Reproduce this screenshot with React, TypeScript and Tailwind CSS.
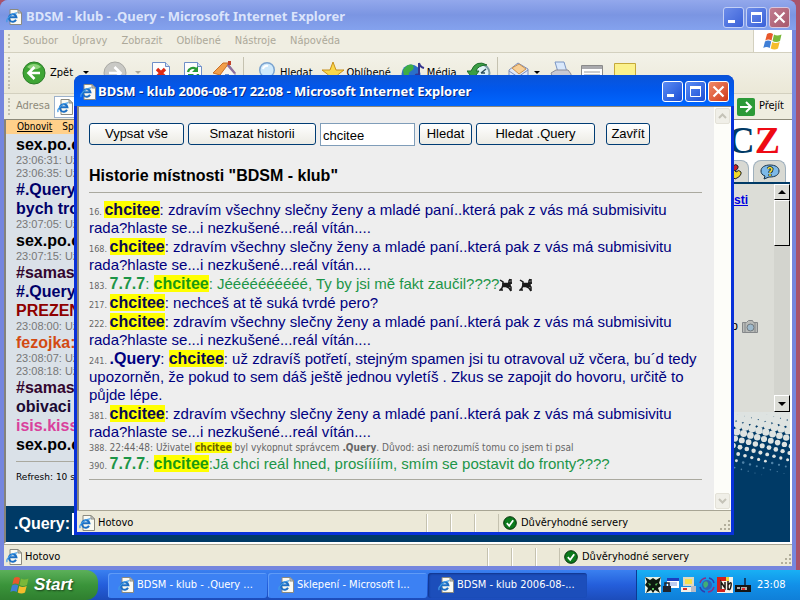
import React from 'react';

type Part = { text: string; kind?: 'hit' | 'bold' | 'seven' };

interface LogEntry {
    id: number;
    parts: Part[];
    tone?: 'navy' | 'green' | 'system';
    cats?: boolean;
}

const SPAM = ': zdravím všechny slečny ženy a mladé paní..která pak z vás má submisivitu rada?hlaste se...i nezkušené...reál vítán....';

const LOG: LogEntry[] = [
    { id: 16, parts: [{ text: 'chcitee', kind: 'hit' }, { text: SPAM }] },
    { id: 168, parts: [{ text: 'chcitee', kind: 'hit' }, { text: SPAM }] },
    {
        id: 183,
        tone: 'green',
        cats: true,
        parts: [
            { text: '7.7.7', kind: 'seven' },
            { text: ': ' },
            { text: 'chcitee', kind: 'hit' },
            { text: ': Jéééééééééé, Ty by jsi mě fakt zaučil????' },
        ],
    },
    { id: 217, parts: [{ text: 'chcitee', kind: 'hit' }, { text: ': nechceš at tě suká tvrdé pero?' }] },
    { id: 222, parts: [{ text: 'chcitee', kind: 'hit' }, { text: SPAM }] },
    {
        id: 241,
        parts: [
            { text: '.Query', kind: 'bold' },
            { text: ': ' },
            { text: 'chcitee', kind: 'hit' },
            { text: ': už zdravíš potřetí, stejným spamen jsi tu otravoval už včera, bu´d tedy upozorněn, že pokud to sem dáš ještě jednou vyletíš . Zkus se zapojit do hovoru, určitě to půjde lépe.' },
        ],
    },
    { id: 381, parts: [{ text: 'chcitee', kind: 'hit' }, { text: SPAM }] },
    {
        id: 388,
        tone: 'system',
        parts: [
            { text: '22:44:48: Uživatel ' },
            { text: 'chcitee', kind: 'hit' },
            { text: ' byl vykopnut správcem ' },
            { text: '.Query', kind: 'bold' },
            { text: '. Důvod: asi nerozumíš tomu co jsem ti psal' },
        ],
    },
    {
        id: 390,
        tone: 'green',
        parts: [
            { text: '7.7.7', kind: 'seven' },
            { text: ': ' },
            { text: 'chcitee', kind: 'hit' },
            { text: ':Já chci reál hned, prosíííím, smím se postavit do fronty????' },
        ],
    },
];

const CHAT = [
    { text: 'sex.po.c', color: 'text-black' },
    { text: '23:06:31: Už' },
    { text: '23:06:35: Už' },
    { text: '#.Query:', color: 'text-[#00006a]' },
    { text: 'bych tro', color: 'text-[#00006a]' },
    { text: '23:07:05: Už' },
    { text: 'sex.po.c', color: 'text-black' },
    { text: '23:07:15: Už' },
    { text: '#samas', color: 'text-[#33062f]' },
    { text: '#.Query:', color: 'text-[#00006a]' },
    { text: 'PREZEN', color: 'text-[#8f0000]' },
    { text: '23:08:00: Už' },
    { text: 'fezojka:', color: 'text-[#d34a12]' },
    { text: '23:08:07: Už' },
    { text: '23:08:18: Už' },
    { text: '#samas', color: 'text-[#33062f]' },
    { text: 'obivaci', color: 'text-[#1a0a33]' },
    { text: 'isis.kiss', color: 'text-[#d9409c]' },
    { text: 'sex.po.c', color: 'text-black' },
];

const MENU = ['Soubor', 'Úpravy', 'Zobrazit', 'Oblíbené', 'Nástroje', 'Nápověda'];

const UI = "font-['DejaVu_Sans_Condensed','DejaVu_Sans',sans-serif] text-[11px]";
const ARIAL = "font-['Liberation_Sans',Arial,sans-serif]";

const PageIcon = () => (
    <svg viewBox="0 0 16 16" className="h-4 w-4 shrink-0">
        <path d="M4 .5h8l3.5 3.5v11.5H4z" fill="#fbfaf2" stroke="#8b8a80" />
        <path d="M12 .5v3.500h3.500z" fill="#cfd3d8" stroke="#8b8a80" />
        <path d="M10 10.800a3.800 3.800 0 1 1 .4-2.600H3.600" fill="none" stroke="#1c6fc4" strokeWidth="2" />
        <path d="M1.300 13C-.8 10.500 6 3.500 11.400 4" fill="none" stroke="#3f9ae6" strokeWidth="1.200" />
    </svg>
);

const FlagIcon = ({ className }: { className: string }) => (
    <svg viewBox="0 0 20 18" className={className}>
        <path d="M4 2Q7 0 10 2L8.500 8.500Q5.500 6.500 2.300 8.500z" fill="#e8582c" />
        <path d="M11 2.500Q14 4.500 18.500 2.500L17 9Q13 11 9.500 9z" fill="#7ab83a" />
        <path d="M2 9.500Q5 7.500 8.200 9.500L6.700 16Q3.500 14 .3 16z" fill="#3f7fd6" />
        <path d="M9.200 10Q12.500 12 16.700 10L15 16.500Q11.500 18.500 7.700 16.500z" fill="#f5bd2c" />
    </svg>
);

const CheckIcon = () => (
    <svg viewBox="0 0 14 14" className="h-3.5 w-3.5 shrink-0">
        <circle cx="7" cy="7" r="6.300" fill="#0c7a1c" stroke="#06300b" />
        <path d="M3.800 7.200l2.400 2.600 4-5.600" fill="none" stroke="#fff" strokeWidth="1.800" />
    </svg>
);

const CatIcon = () => (
    <svg viewBox="0 0 14 14" className="mr-1.5 inline h-3.5 w-3.5 align-[-3px]" fill="none" stroke="#1b1b1b" strokeWidth="1.500">
        <path d="M1 2l3 2v3h6V3l1-2M12 1v5" />
        <path d="M4 7l-1 3-2 2h3M5 7l5 3 2 3M10 7l2 2v4M9 5h4" />
        <path d="M4 5.500h7v3H4z" fill="#1b1b1b" />
    </svg>
);

const Grip = () => (
    <svg viewBox="0 0 12 12" className="h-3 w-3 self-end" fill="#b3af9c">
        <path d="M9 0h2v2H9zM9 4h2v2H9zM5 4h2v2H5zM9 8h2v2H9zM5 8h2v2H5zM1 8h2v2H1z" />
    </svg>
);

const Caret = ({ color }: { color: string }) => (
    <svg viewBox="0 0 6 4" className="h-1 w-1.5" fill={color}>
        <path d="M0 0h6L3 3z" />
    </svg>
);

const Handle = () => <span className="my-1 w-px self-stretch border-l-2 border-dotted border-[#c2bfae]" />;

// halftone fade: slanted lattice of dots that shrink towards the bottom
const Dots = () => {
    const dots: React.ReactNode[] = [];
    for (let row = -6; row < 13; row++) {
        for (let col = -1; col < 24; col++) {
            const x = col * 6.8 - row * 1.8;
            const y = row * 6.8 + col * 1.8;
            const r = Math.min(5.2, 5.1 - y * 0.075);
            if (y < -8 || r <= 0.3) continue;
            dots.push(<circle key={`${row}:${col}`} cx={x} cy={y} r={r} fill={y > 50 ? '#4f83a8' : '#dee3e1'} />);
        }
    }
    return (
        <svg viewBox="0 0 128 80" className="block h-20 w-full bg-[#003a66]" preserveAspectRatio="xMaxYMin slice">
            {dots}
        </svg>
    );
};

const WindowButtons = ({ active }: { active: boolean }) => {
    const blue = active
        ? 'border-white bg-linear-to-br from-[#5c8cf4] to-[#1c4cd4]'
        : 'border-[#c3d0f6] bg-linear-to-br from-[#6c8cea] to-[#3a60d8]';
    const red = active
        ? 'border-white bg-linear-to-br from-[#f08a68] to-[#cf3411]'
        : 'border-[#d9c6dc] bg-linear-to-br from-[#c07c90] to-[#a8586c]';
    const box = 'grid h-[21px] w-[21px] place-items-center rounded-[3px] border';
    return (
        <div className="flex gap-0.5">
            <button aria-label="Minimalizovat" className={`${box} ${blue}`}>
                <svg viewBox="0 0 19 19" className="h-[19px] w-[19px]"><path d="M4 12h7v3H4z" fill="#fff" /></svg>
            </button>
            <button aria-label="Maximalizovat" className={`${box} ${blue}`}>
                <svg viewBox="0 0 19 19" className="h-[19px] w-[19px]">
                    <path d="M4.500 5.500h10v9h-10z" fill="none" stroke="#fff" />
                    <path d="M4 4h11v3H4z" fill="#fff" />
                </svg>
            </button>
            <button aria-label="Zavřít okno" className={`${box} ${red}`}>
                <svg viewBox="0 0 19 19" className="h-[19px] w-[19px]">
                    <path d="M4.500 4.500l10 10M14.500 4.500l-10 10" stroke="#fff" strokeWidth="2.200" />
                </svg>
            </button>
        </div>
    );
};

const StatusBar = () => (
    <footer className={`${UI} flex h-[22px] shrink-0 items-center border-t border-[#a8a594] bg-[#ece9d8] pt-0.5 pl-0.5 text-black`}>
        <PageIcon />
        <span className="ml-[3px] flex-1 pt-px">Hotovo</span>
        {[0, 1, 2].map((n) => (
            <span key={n} className="h-[18px] w-6 border-l border-[#c5c2b0] shadow-[inset_1px_0_#fff]" />
        ))}
        <div className="flex h-[18px] w-[233px] items-center gap-1 border-l border-[#c5c2b0] pl-1">
            <CheckIcon />
            <span className="flex-1 pt-px">Důvěryhodné servery</span>
            <Grip />
        </div>
    </footer>
);

const Toolbar = () => (
    <div className={`${UI} flex h-[41px] items-center border-b border-[#d3d0bf] bg-linear-to-b from-[#f3f2e9] to-[#ebe8d7] pl-1 text-black`}>
        <Handle />
        <button className="ml-3 flex items-center gap-1">
            <svg viewBox="0 0 24 24" className="h-6 w-6">
                <circle cx="12" cy="12" r="11" fill="#3fa535" stroke="#2b7d28" />
                <path d="M5 6a9 8 0 0 1 14 0q-7 5-14 0z" fill="#8fd47c" />
                <path d="M12.500 6l-6 6 6 6M7 12h11" fill="none" stroke="#fff" strokeWidth="2.600" />
            </svg>
            Zpět
        </button>
        <span className="ml-2.5"><Caret color="#000" /></span>
        <button aria-label="Vpřed" className="ml-3.5 flex items-center gap-2">
            <svg viewBox="0 0 24 24" className="h-6 w-6">
                <circle cx="12" cy="12" r="11" fill="#c9c9c5" stroke="#a9a9a4" />
                <path d="M11.500 6l6 6-6 6M17 12H6" fill="none" stroke="#fff" strokeWidth="2.600" />
            </svg>
            <Caret color="#aca899" />
        </button>
        <button aria-label="Zastavit" className="ml-2.5">
            <svg viewBox="0 0 20 24" className="h-6 w-5">
                <path d="M1.500 1.500h13l4 4v17h-17z" fill="#fdfdfd" stroke="#6f8fc8" />
                <path d="M14.500 1.500v4h4" fill="#d5e1f5" stroke="#6f8fc8" />
                <path d="M6 8l8 8M14 8l-8 8" stroke="#dd2a14" strokeWidth="3.400" />
            </svg>
        </button>
        <button aria-label="Obnovit stránku" className="ml-3">
            <svg viewBox="0 0 20 24" className="h-6 w-5">
                <path d="M1.500 1.500h13l4 4v17h-17z" fill="#fdfdfd" stroke="#6f8fc8" />
                <path d="M14.500 1.500v4h4" fill="#d5e1f5" stroke="#6f8fc8" />
                <path d="M5 11a5 5 0 0 1 8-3M15 13a5 5 0 0 1-8 4" fill="none" stroke="#2a9a35" strokeWidth="2.400" />
                <path d="M15 5v6h-6zM5 19v-6h6z" fill="#2a9a35" />
            </svg>
        </button>
        <button aria-label="Domů" className="ml-2.5">
            <svg viewBox="0 0 24 24" className="h-6 w-6">
                <path d="M7 11l8-8 7 9v11H7z" fill="#f7f4ef" stroke="#9a8fa0" />
                <path d="M0 12L10 2l6 0L7 14z" fill="#f2a04b" stroke="#c96f26" />
                <path d="M15 2l8 10-2 1-7-8z" fill="#8d6f9e" />
                <path d="M15 0h3v4h-3z" fill="#c2452c" />
                <path d="M12 13h4v9h-4z" fill="#6d93cf" />
            </svg>
        </button>
        <span className="ml-1.5 h-8 w-px bg-[#c5c2b0]" />
        <button className="ml-3.5 flex items-center gap-0.5">
            <svg viewBox="0 0 20 24" className="h-6 w-5">
                <path d="M13 15l6 7" stroke="#b78a4c" strokeWidth="3" />
                <circle cx="9" cy="9" r="7.300" fill="#cfe9fb" stroke="#7ba4d0" strokeWidth="1.500" />
                <path d="M5 8a4 4 0 0 1 5-3" fill="none" stroke="#fff" strokeWidth="2" />
            </svg>
            Hledat
        </button>
        <button className="ml-2 flex items-center gap-0.5">
            <svg viewBox="0 0 24 24" className="h-6 w-6">
                <path d="M12 1l3 8h8l-6.500 5 2.500 8-7-5-7 5 2.500-8L1 9h8z" fill="#fbd84a" stroke="#c8901c" />
            </svg>
            Oblíbené
        </button>
        <button className="ml-2.5 flex items-center gap-0.5">
            <svg viewBox="0 0 24 24" className="h-6 w-6">
                <circle cx="10" cy="13" r="9.500" fill="#2b6fc9" />
                <path d="M2 9q5-7 10-5 2 4-2 6t-1 6q-4 2-6-1z" fill="#3fae43" />
                <path d="M18 2v13M18 2q1 4 5 5" fill="none" stroke="#35358f" strokeWidth="2" />
                <circle cx="16" cy="15" r="2.500" fill="#35358f" />
            </svg>
            Média
        </button>
        <button aria-label="Historie" className="ml-2.5">
            <svg viewBox="0 0 24 24" className="h-6 w-6">
                <circle cx="14" cy="12" r="8.500" fill="#dff1f5" stroke="#7d9aa5" strokeWidth="2" />
                <path d="M14 12l5-4M14 12h4" fill="none" stroke="#2d4f5c" strokeWidth="1.500" />
                <path d="M20 4Q9-2 4 10H0l6 8 6-8H9q2-6 11-6z" fill="#3c9e45" stroke="#1e6d2c" />
            </svg>
        </button>
        <span className="ml-1.5 h-8 w-px bg-[#c5c2b0]" />
        <button aria-label="Pošta" className="ml-2.5 flex items-center gap-1">
            <svg viewBox="0 0 22 24" className="h-6 w-[22px]">
                <path d="M1 9l9-7 10 6v12H1z" fill="#dfe7f7" stroke="#7d8db8" />
                <path d="M4 7l7-4 7 5-7 5z" fill="#f8cf96" stroke="#c99350" />
                <path d="M1 10l9 6 10-7" fill="none" stroke="#7d8db8" />
            </svg>
            <Caret color="#000" />
        </button>
        <button aria-label="Tisk" className="ml-2.5">
            <svg viewBox="0 0 22 24" className="h-6 w-[22px]">
                <path d="M5 1h9l3 10H8z" fill="#d9e8fb" stroke="#7b96c4" />
                <path d="M1 12l5-3h12l3 4v7H4z" fill="#c9c9d3" stroke="#8d8d98" />
            </svg>
        </button>
        <button aria-label="Upravit" className="ml-2">
            <svg viewBox="0 0 24 24" className="h-6 w-6">
                <path d="M1.500 4.500h21v16h-21z" fill="#fff" stroke="#8a8a8a" />
                <path d="M2 5h20v3H2z" fill="#a9a9ad" />
                <path d="M4 11h16M4 14h16" stroke="#9a9a9a" />
            </svg>
        </button>
        <button aria-label="Diskuse" className="ml-2.5">
            <svg viewBox="0 0 22 24" className="h-6 w-[22px]">
                <path d="M.5 2.500h21v18H.5z" fill="#fbf18c" stroke="#c5a93a" />
            </svg>
        </button>
    </div>
);

const ChatFrame = () => (
    <div className={`${ARIAL} flex min-h-0 flex-1 flex-col bg-[#dae1e8]`}>
        <nav className="flex h-3.5 shrink-0 gap-2.5 overflow-hidden bg-[#ffd08a] pl-[11px] font-['DejaVu_Sans_Condensed',sans-serif] text-[10px] leading-3.5 text-black">
            <a href="#obnovit" className="underline">Obnovit</a>
            <a href="#sp">Sp</a>
        </nav>
        <div className="min-h-0 flex-1 overflow-hidden px-2.5 pt-px">
            {CHAT.map((line, i) =>
                line.color ? (
                    <p key={i} className={`h-[19px] text-base leading-[19px] font-bold whitespace-nowrap ${line.color}`}>{line.text}</p>
                ) : (
                    <p key={i} className="h-[13px] text-[11px] leading-[13px] whitespace-nowrap text-[#777]">{line.text}</p>
                ),
            )}
            <hr className="mt-[7px] border-[#aaa99f]" />
            <p className="mt-2 font-['DejaVu_Sans',sans-serif] text-[9px] leading-3.5 text-black">Refresh: 10 s</p>
        </div>
        <form className="flex h-9 shrink-0 items-center gap-0.5 bg-[#003a66] pl-2">
            <label htmlFor="vzkaz" className="text-base font-bold text-white">.Query:</label>
            <input id="vzkaz" className="h-[22px] w-60 bg-white" />
        </form>
    </div>
);

const SidePanel = () => (
    <aside className="flex w-32 shrink-0 flex-col bg-[#003a66]">
        <div className="flex h-[62px] flex-col justify-between bg-white">
            <p className="pr-2.5 text-right font-['Liberation_Serif',serif] text-[38px] leading-10 font-bold text-[#003a66]">
                C<span className="text-[#ee0a14]">Z</span>
            </p>
            <div className="flex justify-end gap-1 pr-1">
                <button aria-label="Oblíbení" className="grid h-[23px] w-[33px] place-items-center rounded-t-lg border border-b-0 border-[#9fb0bd] bg-[#d8d9d3]">
                    <svg viewBox="0 0 20 18" className="h-[18px] w-5">
                        <path d="M9 9Q2 4 5 1q4-1 5 2 3-3 5 0 1 4-6 6z" fill="#c3202a" stroke="#222" />
                        <path d="M12 16Q5 10 8 7q4-1 5 2 3-3 5 0 1 4-6 7z" fill="#f0d92a" stroke="#222" />
                    </svg>
                </button>
                <button aria-label="Nápověda chatu" className="grid h-[23px] w-[33px] place-items-center rounded-t-lg border border-b-0 border-[#9fb0bd] bg-[#d8d9d3]">
                    <svg viewBox="0 0 20 16" className="h-4 w-5">
                        <path d="M10 1c5 0 9 2 9 6s-4 6-9 6l-1 0-5 2 1-3C2 11 1 9 1 7c0-4 4-6 9-6z" fill="#7db9e8" stroke="#16324a" />
                        <path d="M8 5q2-3 4 0 0 2-2 3v1M10 10v2" fill="none" stroke="#16324a" strokeWidth="3.200" />
                        <path d="M8 5q2-3 4 0 0 2-2 3v1M10 10v2" fill="none" stroke="#f4e23a" strokeWidth="1.500" />
                    </svg>
                </button>
            </div>
        </div>
        <div className={`${ARIAL} flex h-[230px] border-t-2 border-[#003a66] bg-[#dcddd7]`}>
            <div className="flex-1 pt-2 text-xs font-bold">
                <p className="pr-[26px] text-right"><a href="#mistnosti" className="text-[#0000e0] underline">sti</a></p>
                <div className="mt-[110px] flex items-center justify-end gap-1 pr-4 font-normal text-black">
                    o
                    <svg viewBox="0 0 16 13" className="h-[13px] w-4">
                        <path d="M.5 2.500h4l2-2h4l1 2h4v10H.5z" fill="#b9bbb8" stroke="#85888a" />
                        <circle cx="8.500" cy="7.500" r="3.500" fill="#9db9cc" stroke="#72797e" />
                        <path d="M3 3v9M13 3v9" stroke="#85888a" />
                    </svg>
                </div>
            </div>
            <div className="flex w-4 flex-col bg-[#d3d4ce]">
                <button aria-label="Nahoru" className="grid h-4 place-items-center border border-t-white border-l-white border-r-black border-b-black bg-[#dcddd7]">
                    <svg viewBox="0 0 8 4" className="h-1 w-2"><path d="M0 4l4-4 4 4z" /></svg>
                </button>
                <span className="h-[46px] border border-t-white border-l-white border-r-black border-b-black bg-[#dcddd7]" />
                <button aria-label="Dolů" className="mt-auto grid h-[17px] place-items-center border border-t-white border-l-white border-r-black border-b-black bg-[#dcddd7]">
                    <svg viewBox="0 0 8 4" className="h-1 w-2"><path d="M0 0l4 4 4-4z" /></svg>
                </button>
            </div>
        </div>
        <Dots />
    </aside>
);

const MainWindow = () => (
    <section className="absolute inset-y-0 right-1 left-0 flex flex-col rounded-t-lg bg-[#7586de] px-1 pb-1">
        <header className="-mx-1 flex h-[30px] shrink-0 items-center rounded-t-lg bg-linear-to-b from-[#93a8ec] via-[#7b95e2] to-[#84a2ee] pt-1 pr-1.5 pl-1.5">
            <PageIcon />
            <h2 className="ml-1 flex-1 font-['Noto_Sans',sans-serif] text-[13px] font-bold text-[#dbe4fb]">BDSM - klub - .Query - Microsoft Internet Explorer</h2>
            <WindowButtons active={false} />
        </header>
        <div className="flex h-[23px] shrink-0 items-center border-b border-[#d3d0bf] bg-[#f0eee2] pl-1">
            <Handle />
            <nav className={`${UI} ml-[13px] flex flex-1 gap-3.5 text-[#aca899]`}>
                {MENU.map((item) => (
                    <button key={item}>{item}</button>
                ))}
            </nav>
            <div className="grid h-full w-[39px] place-items-center border-l border-[#d3d0bf] bg-white">
                <FlagIcon className="h-[18px] w-5" />
            </div>
        </div>
        <Toolbar />
        <div className={`${UI} flex h-[26px] shrink-0 items-center border-b border-[#8d8a7a] bg-[#efede0] pl-1`}>
            <Handle />
            <label htmlFor="adresa" className="ml-1.5 text-[#8d8a7a]">Adresa</label>
            <div className="ml-1 flex h-[22px] flex-1 items-center border border-[#9db2cc] bg-white pl-0.5">
                <PageIcon />
                <input id="adresa" className="min-w-0 flex-1" />
            </div>
            <button className="ml-1 flex items-center gap-1 pr-2 text-black">
                <svg viewBox="0 0 18 18" className="h-[18px] w-[18px]">
                    <rect width="18" height="18" rx="2" fill="#2c9a38" />
                    <path d="M3 9h11M9 4l5 5-5 5" fill="none" stroke="#fff" strokeWidth="2" />
                </svg>
                Přejít
            </button>
        </div>
        <div className="flex min-h-0 flex-1 border-r-2 border-b-2 border-l-2 border-r-white border-b-white border-l-[#85837a] bg-[#003a66]">
            <ChatFrame />
            <SidePanel />
        </div>
        <StatusBar />
    </section>
);

const toneClass = {
    navy: 'mt-px text-[15px] leading-[18px] text-[#000080]',
    green: 'mt-px text-[15px] leading-[18px] text-[#1c9548]',
    system: "mt-px font-['DejaVu_Sans_Condensed',sans-serif] text-[10px] leading-3 text-[#666]",
};

const kindClass = {
    hit: 'bg-[#ffff00] font-bold',
    bold: 'font-bold',
    seven: 'font-bold text-[#1c9548]',
};

const hitColor = {
    navy: 'text-[#0a0a50]',
    green: 'text-[#1a9a10]',
    system: 'text-[#6a6400]',
};

const Entry: React.FC<LogEntry> = ({ id, parts, tone = 'navy', cats }) => (
    <li className={toneClass[tone]}>
        <span className="font-['DejaVu_Sans_Condensed',sans-serif] text-[9px] leading-3 text-[#666]">{id}. </span>
        {parts.map((part, i) => (
            <span
                key={i}
                className={part.kind ? `${kindClass[part.kind]} ${part.kind === 'hit' ? hitColor[tone] : ''} ${tone === 'system' ? '' : 'text-base leading-[18px]'}` : ''}
            >
                {part.text}
            </span>
        ))}
        {cats && (
            <>
                <CatIcon />
                <CatIcon />
            </>
        )}
    </li>
);

const BTN = 'h-[22px] shrink-0 rounded-[3px] border border-[#003c74] bg-linear-to-b from-white to-[#ecebe4] text-[13px] text-black';

const HistoryWindow = () => (
    <section className="absolute top-[75px] right-[66px] bottom-[35px] left-[74px] flex flex-col rounded-t-lg bg-[#0831d9] px-[3px] pb-[3px]">
        <header className="-mx-[3px] flex h-[31px] shrink-0 items-center rounded-t-lg bg-linear-to-b from-[#0a53d8] via-[#0058ee] to-[#0066ff] pt-0.5 pr-[5px] pl-1.5">
            <PageIcon />
            <h1 className="ml-0.5 flex-1 font-['Noto_Sans',sans-serif] text-[13px] font-bold text-white [text-shadow:1px_1px_#0a2a80]">
                BDSM - klub 2006-08-17 22:08 - Microsoft Internet Explorer
            </h1>
            <WindowButtons active />
        </header>
        <div className="flex min-h-0 flex-1 border-t border-l-2 border-[#8a887d] bg-[#eeeeee]">
            <main className={`${ARIAL} min-w-0 flex-1 overflow-hidden pt-4 pr-3 pl-2.5`}>
                <form className="flex h-[23px] items-start" onSubmit={(e) => e.preventDefault()}>
                    <button className={`${BTN} w-[95px]`}>Vypsat vše</button>
                    <button className={`${BTN} ml-1 w-32`}>Smazat historii</button>
                    <input
                        aria-label="Hledaný text"
                        defaultValue="chcitee"
                        className="ml-1 h-[23px] w-[95px] border border-[#7f9db9] bg-white px-0.5 pt-0.5 text-[13px] text-black"
                    />
                    <button className={`${BTN} ml-1 w-[53px]`}>Hledat</button>
                    <button className={`${BTN} ml-1 w-[119px]`}>Hledat .Query</button>
                    <button className={`${BTN} ml-[11px] w-11`}>Zavřít</button>
                </form>
                <h2 className="mt-5 text-base leading-5 font-bold text-black">Historie místnosti "BDSM - klub"</h2>
                <hr className="mt-1.5 border-[#aaa99f]" />
                <ul className="mt-2">
                    {LOG.map((entry) => (
                        <Entry key={entry.id} {...entry} />
                    ))}
                </ul>
                <hr className="mt-1.5 border-[#aaa99f]" />
            </main>
            <div className="flex w-[17px] shrink-0 flex-col justify-between bg-[#fdfdf9] p-px">
                <button aria-label="Posunout nahoru" className="grid h-4 place-items-center rounded-xs border border-[#e4e2d8] bg-[#f0efe8]">
                    <svg viewBox="0 0 9 6" className="h-1.5 w-[9px]"><path d="M1 5l3.500-3.500L8 5" fill="none" stroke="#c5c3b8" strokeWidth="2" /></svg>
                </button>
                <button aria-label="Posunout dolů" className="grid h-4 place-items-center rounded-xs border border-[#e4e2d8] bg-[#f0efe8]">
                    <svg viewBox="0 0 9 6" className="h-1.5 w-[9px]"><path d="M1 1l3.500 3.500L8 1" fill="none" stroke="#c5c3b8" strokeWidth="2" /></svg>
                </button>
            </div>
        </div>
        <StatusBar />
    </section>
);

const TASKS = ['BDSM - klub - .Query ...', 'Sklepení - Microsoft I...', 'BDSM - klub 2006-08-...'];

const Taskbar = () => (
    <footer className={`${UI} flex h-[30px] shrink-0 items-center bg-linear-to-b from-[#3a80f0] via-[#245edb] to-[#1c4cba] text-white`}>
        <button className={`${ARIAL} flex h-full w-[98px] items-center gap-1 rounded-r-xl bg-linear-to-b from-[#5cb05a] via-[#3a943a] to-[#2f7f2f] pl-2.5 text-[17px] font-bold italic [text-shadow:1px_1px_2px_#1a401a]`}>
            <FlagIcon className="h-[18px] w-5" />
            Start
        </button>
        <div className="ml-2.5 flex min-w-0 flex-1 gap-px">
            {TASKS.map((task, i) => (
                <button
                    key={task}
                    className={`flex h-[25px] w-[159px] items-center gap-[3px] rounded-[3px] pl-2.5 ${i === 2 ? 'bg-[#1c4ebb] shadow-[inset_1px_1px_2px_#10348a]' : 'bg-[#3c81f3] shadow-[inset_1px_1px_#5f9bf7]'}`}
                >
                    <PageIcon />
                    {task}
                </button>
            ))}
        </div>
        <div className="flex h-full w-[164px] items-center gap-0.5 border-l border-[#0c3a94] bg-linear-to-b from-[#19b0f4] via-[#1290e8] to-[#0f7fd8] pl-2">
            <svg viewBox="0 0 16 16" className="h-4 w-4">
                <path d="M0 0h16v16H0z" fill="#e8f2e6" />
                <path d="M0 0l5 3 3-2 3 2 5-3-2 6 2 3-3 2 2 5-5-3-2 3-2-3-5 3 2-5-3-3 2-3z" fill="#0d1a10" />
                <path d="M3 6l3 1-1 2zM13 6l-3 1 1 2zM7 11h2v2H7z" fill="#5cc05a" />
            </svg>
            <svg viewBox="0 0 16 16" className="h-4 w-4">
                <path d="M4 1h12v10H4z" fill="#fff" />
                <path d="M4 1h12v3H4z" fill="#1b3fbf" />
                <path d="M6 6h8M6 8h8" stroke="#7c9ae0" />
                <path d="M0 9h8v6H0z" fill="#20242c" />
                <path d="M2 9V6h4v3" fill="none" stroke="#20242c" strokeWidth="1.500" />
            </svg>
            <svg viewBox="0 0 16 16" className="h-4 w-4">
                <path d="M2 0h11v9H2z" fill="#ddd9c4" />
                <path d="M4 2h7v5H4z" fill="#f6e04c" />
                <path d="M0 10h10v5H0z" fill="#f3efe6" />
                <path d="M2 12h4" stroke="#d8322a" strokeWidth="2" />
                <path d="M10 9h5v6h-5z" fill="#b7bcc8" />
            </svg>
            <svg viewBox="0 0 16 16" className="h-4 w-4">
                <circle cx="8" cy="8" r="5" fill="#2d62b8" />
                <path d="M5 5q3-2 4 1t-3 5q-3-3-1-6z" fill="#3fae76" />
                <path d="M1 6a7 7 0 0 1 6-5M15 10a7 7 0 0 1-6 5" fill="none" stroke="#8a2f86" strokeWidth="1.500" />
                <path d="M10 1a7 7 0 0 1 5 5M6 15a7 7 0 0 1-5-5" fill="none" stroke="#2c3fb0" strokeWidth="1.500" />
            </svg>
            <svg viewBox="0 0 16 16" className="h-4 w-4">
                <path d="M0 0h16v16H0z" fill="#f7f1ea" />
                <path d="M0 0h9v4H3v8h5v3H0z" fill="#d3201c" />
                <path d="M4 12V5l4 6V5M11 3v10M11 8q4-5 3 1t-3 2" fill="none" stroke="#1a1310" strokeWidth="1.500" />
                <path d="M9 0h3v4H9z" fill="#f3d534" />
            </svg>
            <svg viewBox="0 0 16 16" className="h-4 w-4">
                <path d="M10 1v8" stroke="#12203c" strokeWidth="1.500" />
                <path d="M0 8h16v7H0z" fill="#151515" />
                <path d="M2 10h3v2H2zM6 10h6v3H6z" fill="#a9a9a9" />
                <path d="M7 11h3v2H7z" fill="#e32525" />
            </svg>
            <time className="ml-1">23:08</time>
        </div>
    </footer>
);

const App: React.FC = () => (
    <div className="flex h-screen min-h-[480px] flex-col overflow-hidden bg-[#a8536b]">
        <div className="relative min-h-0 flex-1">
            <MainWindow />
            <HistoryWindow />
        </div>
        <Taskbar />
    </div>
);

export default App;
